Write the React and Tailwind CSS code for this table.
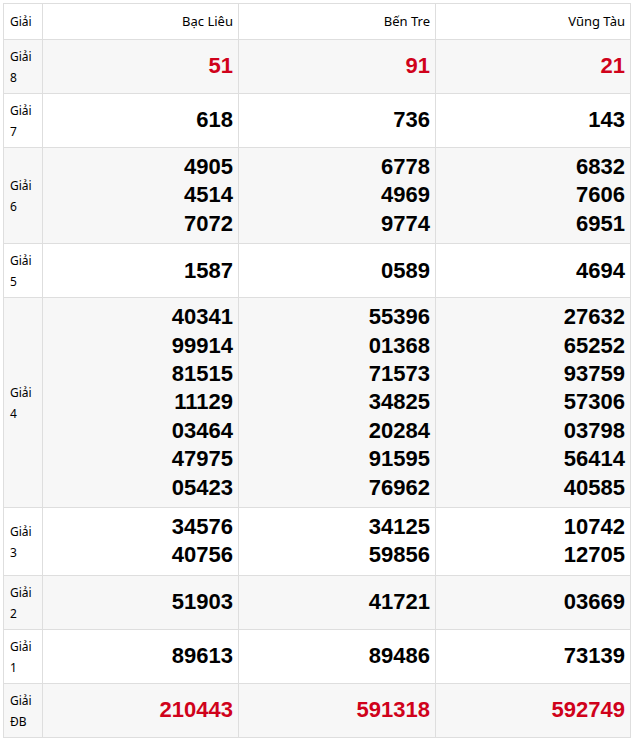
import React from "react";

const provinces = ["Bạc Liêu", "Bến Tre", "Vũng Tàu"];

const rows = [
  { name: "8", red: true, values: [["51"], ["91"], ["21"]] },
  { name: "7", values: [["618"], ["736"], ["143"]] },
  {
    name: "6",
    values: [
      ["4905", "4514", "7072"],
      ["6778", "4969", "9774"],
      ["6832", "7606", "6951"],
    ],
  },
  { name: "5", values: [["1587"], ["0589"], ["4694"]] },
  {
    name: "4",
    values: [
      ["40341", "99914", "81515", "11129", "03464", "47975", "05423"],
      ["55396", "01368", "71573", "34825", "20284", "91595", "76962"],
      ["27632", "65252", "93759", "57306", "03798", "56414", "40585"],
    ],
  },
  {
    name: "3",
    values: [
      ["34576", "40756"],
      ["34125", "59856"],
      ["10742", "12705"],
    ],
  },
  { name: "2", values: [["51903"], ["41721"], ["03669"]] },
  { name: "1", values: [["89613"], ["89486"], ["73139"]] },
  { name: "ĐB", red: true, values: [["210443"], ["591318"], ["592749"]] },
];

export default function App() {
  return (
    <div className="bg-white p-[3px] font-['Noto_Sans',sans-serif]">
      <table className="w-[627px] table-fixed border-collapse border border-[#dedede]">
        <colgroup>
          <col className="w-[39px]" />
          <col className="w-[196px]" />
          <col className="w-[197px]" />
          <col className="w-[195px]" />
        </colgroup>
        <thead>
          <tr className="h-[36px] bg-white">
            <th className="border border-[#dedede] pl-[6px] text-left text-[12px] font-normal text-black">
              Giải
            </th>
            {provinces.map((p) => (
              <th
                key={p}
                className="border border-[#dedede] pr-[5px] text-right text-[13px] font-normal text-black"
              >
                {p}
              </th>
            ))}
          </tr>
        </thead>
        <tbody>
          {rows.map((row, i) => (
            <tr key={row.name} className={i % 2 === 0 ? "bg-[#f7f7f7]" : "bg-white"}>
              <td className="border border-[#dedede] pt-[6px] pb-[5px] pl-[6px] align-middle text-[12px] leading-[21px] text-black">
                Giải
                <br />
                {row.name}
              </td>
              {row.values.map((vals, j) => (
                <td
                  key={j}
                  className={
                    "border border-[#dedede] py-[5px] pr-[5px] text-right align-middle font-['Liberation_Sans',Arial,sans-serif] text-[22px] font-bold leading-[28.4px] " +
                    (row.red ? "text-[#d0021b]" : "text-black")
                  }
                >
                  {vals.map((v) => (
                    <div key={v}>{v}</div>
                  ))}
                </td>
              ))}
            </tr>
          ))}
        </tbody>
      </table>
    </div>
  );
}
